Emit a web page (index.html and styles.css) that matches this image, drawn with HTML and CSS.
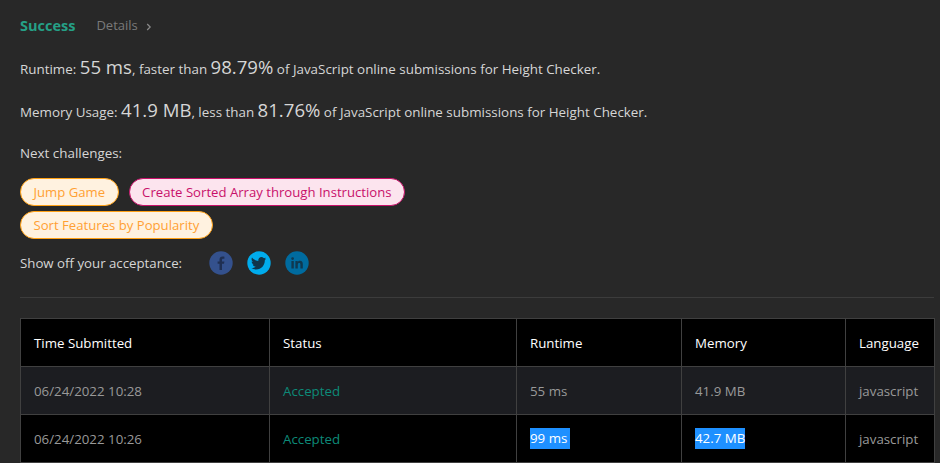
FILE: index.html
```html
<!DOCTYPE html>
<html lang="en">
<head>
    <meta charset="UTF-8">
    <title>Submission Result</title>
    <link rel="stylesheet" href="styles.css">
</head>
<body>
    <div class="result-head">
        <span class="success">Success</span>
        <a class="details">Details</a>
        <svg class="chevron" width="6" height="8" viewBox="0 0 6 8"><path d="M1.2 1 L4.2 4 L1.2 7" fill="none" stroke="#8a8a8a" stroke-width="1.2"/></svg>
    </div>

    <p class="stat stat-runtime">Runtime: <span class="big">55 ms</span>, faster than <span class="big">98.79%</span> of JavaScript online submissions for Height Checker.</p>
    <p class="stat stat-memory">Memory Usage: <span class="big">41.9 MB</span>, less than <span class="big">81.76%</span> of JavaScript online submissions for Height Checker.</p>
    <p class="stat stat-next">Next challenges:</p>

    <div class="tags">
        <a class="tag medium">Jump Game</a>
        <a class="tag hard">Create Sorted Array through Instructions</a>
        <a class="tag medium">Sort Features by Popularity</a>
    </div>

    <div class="share">
        <span class="share-label">Show off your acceptance:</span>
        <div class="share-icons">
            <svg width="24" height="24" viewBox="0 0 24 24"><circle cx="12" cy="12" r="11.7" fill="#34518d"/><path d="M13 19 V12.8 H15 L15.4 10.4 H13 V9 C13 8.2 13.3 7.8 14.2 7.8 H15.4 V5.7 C15 5.6 14.3 5.5 13.6 5.5 C11.7 5.5 10.5 6.6 10.5 8.7 V10.4 H8.6 V12.8 H10.5 V19 Z" fill="#1f2f52"/></svg>
            <svg width="24" height="24" viewBox="0 0 24 24"><circle cx="12" cy="12" r="11.7" fill="#00aced"/><path d="M19 7.6 C18.5 7.8 17.9 8 17.3 8.1 C17.9 7.7 18.4 7.1 18.6 6.4 C18 6.7 17.4 7 16.7 7.1 C16.1 6.5 15.3 6.1 14.4 6.1 C12.7 6.1 11.3 7.5 11.3 9.2 C11.3 9.4 11.3 9.7 11.4 9.9 C8.8 9.8 6.5 8.5 5 6.6 C4.7 7.1 4.6 7.6 4.6 8.2 C4.6 9.3 5.1 10.2 6 10.8 C5.5 10.8 5 10.6 4.6 10.4 C4.6 11.9 5.7 13.2 7.1 13.5 C6.6 13.6 6.2 13.6 5.7 13.5 C6.1 14.8 7.3 15.7 8.7 15.7 C7.3 16.8 5.7 17.3 4.2 17.1 C5.6 18 7.2 18.5 9 18.5 C14.7 18.5 17.8 13.8 17.8 9.7 V9.3 C18.2 8.9 18.7 8.3 19 7.6 Z" fill="#10354a"/></svg>
            <svg width="24" height="24" viewBox="0 0 24 24"><circle cx="12" cy="12" r="11.7" fill="#006b9f"/><path d="M6.4 10 H8.8 V17.6 H6.4 Z M7.6 6.2 A1.4 1.4 0 1 1 7.6 9 A1.4 1.4 0 1 1 7.6 6.2 Z M10.4 10 H12.7 V11 C13.1 10.3 14 9.8 15 9.8 C17.2 9.8 17.8 11.2 17.8 13.2 V17.6 H15.4 V13.7 C15.4 12.7 15.2 12 14.3 12 C13.2 12 12.8 12.7 12.8 13.7 V17.6 H10.4 Z" fill="#0f3850"/></svg>
        </div>
    </div>

    <hr class="divider">

    <table class="submissions">
        <thead>
            <tr>
                <th class="col-time">Time Submitted</th>
                <th class="col-status">Status</th>
                <th class="col-runtime">Runtime</th>
                <th class="col-memory">Memory</th>
                <th class="col-lang">Language</th>
            </tr>
        </thead>
        <tbody>
            <tr class="striped">
                <td>06/24/2022 10:28</td>
                <td class="accepted">Accepted</td>
                <td>55 ms</td>
                <td>41.9 MB</td>
                <td>javascript</td>
            </tr>
            <tr>
                <td>06/24/2022 10:26</td>
                <td class="accepted">Accepted</td>
                <td><span class="selected selected-trail">99 ms</span></td>
                <td><span class="selected">42.7 MB</span></td>
                <td>javascript</td>
            </tr>
        </tbody>
    </table>
</body>
</html>
```

FILE: styles.css
```css
html, body {
    height: 100%;
    overflow: hidden;
}
body {
    margin: 0;
    padding: 14px 6px 0 20px;
    box-sizing: border-box;
    background-color: #282828;
    color: #d6d6d6;
    font-family: "Open Sans", "Noto Sans", sans-serif;
    font-size: 13.4px;
}
.result-head {
    display: flex;
    align-items: center;
    height: 22px;
}
.success {
    color: #25a086;
    font-size: 14.5px;
    font-weight: 700;
    margin-right: 21px;
}
.details {
    color: #7a7a7a;
    font-size: 13px;
    margin-right: 8px;
}
.chevron {
    margin-top: 3px;
}
.stat {
    margin: 0;
    line-height: 24px;
    white-space: nowrap;
}
.stat-runtime {
    margin-top: 19px;
}
.stat-memory {
    margin-top: 17px;
}
.stat-next {
    margin-top: 17px;
}
.big {
    font-size: 18.6px;
}
.tags {
    margin-top: 13px;
    width: 420px;
    display: flex;
    flex-wrap: wrap;
    gap: 5px 10px;
}
.tag {
    height: 28px;
    line-height: 26px;
    box-sizing: border-box;
    padding: 0 12.5px;
    border-radius: 14px;
    border: 1px solid;
    font-size: 13.15px;
}
.medium {
    color: #ffa033;
    border-color: #ffa116;
    background-color: #fff2e0;
}
.hard {
    color: #c8106a;
    border-color: #c8106a;
    background-color: #fce4ee;
}
.share {
    display: flex;
    align-items: center;
    margin-top: 4px;
    height: 40px;
}
.share-label {
    width: 189px;
    font-size: 13.25px;
}
.share-icons {
    display: flex;
    gap: 14px;
}
.divider {
    border: none;
    border-top: 1px solid #3c3c3c;
    margin: 14px 0 20px;
}
.submissions {
    border-collapse: collapse;
    table-layout: fixed;
    width: 914px;
    font-size: 13.3px;
}
.submissions th, .submissions td {
    box-sizing: border-box;
    border: 1px solid #404040;
    height: 48px;
    padding: 0 13px;
    text-align: left;
    font-weight: 400;
    white-space: nowrap;
    background-color: #000;
}
.submissions th {
    color: #fff;
}
.submissions td {
    color: #999;
}
.submissions .striped td {
    background-color: #1c1d21;
}
.submissions td.accepted {
    color: #0d8a78;
}
.col-time { width: 249px; }
.col-status { width: 247px; }
.col-runtime { width: 165px; }
.col-memory { width: 164px; }
.col-lang { width: 89px; }
.selected {
    display: inline-block;
    line-height: 21px;
    background-color: #1e90ff;
    color: #fff;
}
.selected-trail {
    padding-right: 3px;
}
```
